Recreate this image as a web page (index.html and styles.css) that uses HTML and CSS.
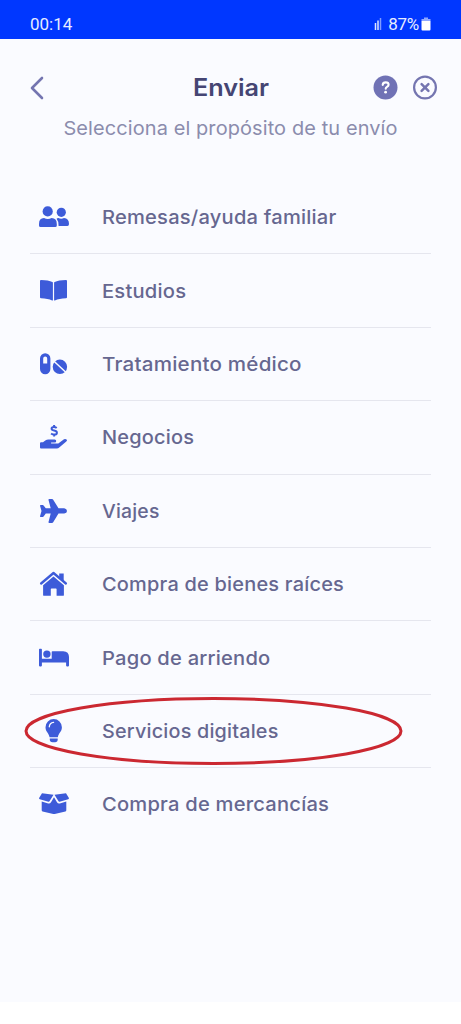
FILE: index.html
```
<!DOCTYPE html>
<html lang="es">
<head>
<meta charset="utf-8">
<meta name="viewport" content="width=device-width, initial-scale=1">
<title>Enviar</title>
<link rel="stylesheet" href="styles.css">
</head>
<body>
<div class="screen">
  <div class="status">
    <span class="clock">00:14</span>
    <div class="status-right">
      <svg class="signal" width="8" height="14" viewBox="0 0 8 14"><path d="M1.500 6v7M4 3.500v9.500" stroke="#dfe6ff" stroke-width="1.500"/><path d="M6.500 1v12" stroke="#7f9bff" stroke-width="1.500"/></svg>
      <span class="percent">87%</span>
      <svg class="battery" width="10" height="14" viewBox="0 0 10 14"><path d="M3 .5h4v1.500h2.500V4h-9V2H3z" fill="#8fa8ff"/><path d="M.5 4h9v8.500q0 1-1 1h-7q-1 0-1-1z" fill="#fff"/></svg>
    </div>
  </div>

  <header class="header">
    <svg class="back" width="16" height="26" viewBox="0 0 16 26"><path d="M13 3 3 13 13 23" fill="none" stroke="#7475b0" stroke-width="2.600" stroke-linecap="round" stroke-linejoin="round"/></svg>
    <h1 class="title">Enviar</h1>
    <div class="actions">
      <svg width="26" height="26" viewBox="0 0 26 26"><circle cx="13.500" cy="12.500" r="12" fill="#7072b5"/><path d="M10.700 9.900q.2-2.500 3-2.500 2.900 0 2.900 2.400 0 1.200-1.600 2.100-1.300.7-1.300 1.900" fill="none" stroke="#fff" stroke-width="2.100" stroke-linecap="round"/><circle cx="13.600" cy="17.200" r="1.400" fill="#fff"/></svg>
      <svg width="26" height="26" viewBox="0 0 26 26"><circle cx="13" cy="12.500" r="10.900" fill="none" stroke="#7475b0" stroke-width="2.200"/><path d="m9.600 9.100 6.800 6.800m0-6.800-6.800 6.800" stroke="#7475b0" stroke-width="2.500" stroke-linecap="round"/></svg>
    </div>
  </header>
  <p class="subtitle">Selecciona el propósito de tu envío</p>

  <ul class="list">
    <li class="row">
      <svg class="icon" viewBox="0 0 32 28"><circle cx="9.700" cy="8.400" r="5.100"/><circle cx="23.300" cy="9.300" r="4.600"/><path d="M6 15.100q3.800 1.800 7.600 0 5.200.2 5.200 5.800v1.600q0 1.600-1.600 1.600H2.500Q1 24.100 1 22.500v-1.600q0-5.600 5-5.800z"/><path d="M18.600 15.800q.8-.8 1.700-.7 3 1.200 5.700 0 5 .4 5 5.800 0 2.100-1.600 2.100h-8.800q.2-4.600-2-7.200z"/></svg>
      <span class="label family">Remesas/ayuda familiar</span>
    </li>
    <li class="row">
      <svg class="icon" viewBox="0 0 32 28"><path d="M3 3q7.500.1 11.400 2.100.5.300.5.800v17q0 .9-.8.600Q10 21.500 3 21.300q-1-.1-1-1V4q0-1 1-1zM28 3q-7.500.1-11.400 2.100-.5.300-.5.800v17q0 .9.800.6Q21 21.500 28 21.300q1-.1 1-1V4q0-1-1-1z"/></svg>
      <span class="label studies">Estudios</span>
    </li>
    <li class="row">
      <svg class="icon" viewBox="0 0 32 28"><path fill-rule="evenodd" d="M2 8.500a5.200 5.200 0 0 1 10.400 0v10.600a5.200 5.200 0 0 1-10.400 0zM5.200 13.600h4V8.500a2 2 0 0 0-4 0z"/><circle cx="21.900" cy="16.800" r="7.200"/><path class="cut" d="m16 11.300 11.800 11" stroke-width="1.500"/></svg>
      <span class="label medical">Tratamiento médico</span>
    </li>
    <li class="row">
      <svg class="icon" viewBox="0 0 32 28"><path class="line" d="M18.700 5.100q-1.200-1-2.800-1-2.300 0-2.300 1.700 0 1.300 2.500 1.800 2.800.5 2.800 2.100 0 1.900-2.600 1.900-1.900 0-3.200-1.100M16.100 2v1.800M16.100 11.800v1.600" stroke-width="2"/><path d="M3 19.300h2l2.300-1.800q1.400-1 3.100-1h6.300q1.500 0 1.500 1.500T16.700 19.600h-3.600v1h7.200l5.700-4.300q1.400-.8 2.600.1 1 1-.3 2.200l-6.800 5.700q-1.200 1.200-2.800 1.200H3q-1 0-1-.9v-4.300q0-1 1-1z"/></svg>
      <span class="label business">Negocios</span>
    </li>
    <li class="row">
      <svg class="icon" viewBox="0 0 32 28"><path d="M26.200 11.300q2.800.7 2.800 2.700t-2.800 2.600h-5.700l-5.300 8.600q-.4.700-1.200.7h-2.700q-1 0-.8-.9l2.200-8.400H7.800l-2.200 2.900q-.3.400-.8.400H2.700q-.8 0-.6-.8L3.500 14 2.100 8.900q-.2-.9.600-.9h2.100q.5 0 .8.400l2.200 2.900h4.900l-2.200-8.400q-.2-1 .8-1H14q.8 0 1.200.8l5.300 8.600z"/></svg>
      <span class="label travel">Viajes</span>
    </li>
    <li class="row">
      <svg class="icon" viewBox="0 0 32 28"><path d="M21.200 3.400h4.500v8l-4.500-3.800z"/><path class="line" d="M3.100 13.500 15.500 3l12.400 10.500" stroke-width="2.300" stroke-linecap="round" stroke-linejoin="round"/><path d="m15.500 6.500 10.400 8.800v9.600q0 .9-.9.900h-6.400v-6.600q0-.7-.7-.7h-4.400q-.7 0-.7.700v6.600H6q-.9 0-.9-.9v-9.600z"/></svg>
      <span class="label estate">Compra de bienes raíces</span>
    </li>
    <li class="row">
      <svg class="icon" viewBox="0 0 32 28"><path d="M1 5.500q0-.8.800-.8h1.300q.8 0 .8.800v9.300h9.800V8q0-.8.800-.8h10.700Q31 7.500 31 13v8.600q0 .8-.8.800h-1.300q-.8 0-.8-.8v-3.100H3.900v3.100q0 .8-.8.800H1.800q-.8 0-.8-.8z"/><circle cx="8.900" cy="10.100" r="3.700"/></svg>
      <span class="label rent">Pago de arriendo</span>
    </li>
    <li class="row">
      <svg class="icon" viewBox="0 0 32 28"><path d="M15.700 2a8.200 8.200 0 0 1 8.200 8.200c0 4.700-3.300 5.500-4.100 10.100h-8.200c-.8-4.600-4.100-5.400-4.100-10.100A8.200 8.200 0 0 1 15.700 2z"/><path d="M11.800 21.500h7.900v1q0 2.800-2.700 2.800h-2.500q-2.700 0-2.700-2.800z"/><path class="cut" d="M11.300 9.800q.3-4 4.300-4.400" stroke-width="1.300" stroke-linecap="round"/></svg>
      <span class="label digital">Servicios digitales</span>
      <svg class="marker" width="380" height="70" viewBox="0 0 380 70"><ellipse cx="189.500" cy="35" rx="187.500" ry="32.500" fill="none" stroke="#cb2831" stroke-width="3"/></svg>
    </li>
    <li class="row">
      <svg class="icon" viewBox="0 0 32 28"><path d="m4 3.300 11.500 1.500-4 6.500q-.4.600-1.100.4l-8.600-2.400Q.8 9 1.100 8.100zM28 3.300 16.500 4.800l4 6.500q.4.600 1.100.4l8.600-2.400q1-.3.700-1.200z"/><path d="m16 7.200 3 5q1 1.700 2.800 1.200l6.500-1.800v8.600q0 1-.9 1.200L16.700 24q-.7.200-1.400 0L4.600 21.400q-.9-.2-.9-1.200v-8.600l6.500 1.800q1.800.5 2.800-1.200z"/></svg>
      <span class="label goods">Compra de mercancías</span>
    </li>
  </ul>
</div>
</body>
</html>
```
FILE: styles.css
```
* { box-sizing: border-box; }

body {
  margin: 0;
  background: #fff;
  font-family: Inter, "Open Sans", sans-serif;
}

.screen {
  width: 461px;
  height: 1002px;
  background: #fafbff;
}

.status {
  height: 39px;
  padding: 9px 30px 0;
  display: flex;
  justify-content: space-between;
  background: #0037ff;
  color: #e6ecff;
  font: 17px/30px Roboto, sans-serif;
}

.status-right {
  display: flex;
  align-items: center;
  height: 30px;
}

.signal { margin-right: 6px; }
.percent { letter-spacing: -0.3px; }
.battery { margin-left: 2px; }

.header {
  height: 76px;
  padding: 22px 23px 0 29px;
  display: grid;
  grid-template-columns: 66px 1fr 66px;
  align-items: center;
}

.title {
  margin: 0 5px 0 0;
  text-align: center;
  font-size: 24px;
  line-height: 32px;
  font-weight: 600;
  color: #454573;
  transform: scaleX(1.05);
}

.actions {
  display: flex;
  justify-content: space-between;
}

.subtitle {
  margin: 0;
  height: 66px;
  line-height: 28px;
  text-align: center;
  white-space: nowrap;
  font-size: 19px;
  letter-spacing: 0.1px;
  color: #8b8cad;
  transform: scaleX(1.05);
}

.list {
  margin: 0;
  padding: 0 30px;
  list-style: none;
}

.row {
  position: relative;
  height: 73.4px;
  padding-left: 8px;
  display: flex;
  align-items: center;
  border-bottom: 1.4px solid #e5e6ee;
}

.row:last-child { border-bottom-color: transparent; }

.icon {
  width: 32px;
  height: 28px;
  flex: none;
  margin-right: 32px;
  fill: #3d5bd9;
}

.line { fill: none; stroke: #3d5bd9; }
.cut { fill: none; stroke: #fafbff; }

.label {
  padding-top: 2px;
  font-size: 19px;
  line-height: 28px;
  font-weight: 500;
  color: #666790;
  white-space: nowrap;
  letter-spacing: 0.2px;
  transform-origin: left center;
}

/* Horizontal widening of the label type */
.family { transform: scaleX(1.059); }
.studies { transform: scaleX(1.061); }
.medical { transform: scaleX(1.083); }
.business { transform: scaleX(1.05); }
.travel { transform: scaleX(1.02); }
.estate { transform: scaleX(1.05); }
.rent { transform: scaleX(1.06); }
.digital { transform: scaleX(1.04); }
.goods { transform: scaleX(1.06); }

.marker {
  position: absolute;
  left: -6px;
  top: 1px;
}
```
